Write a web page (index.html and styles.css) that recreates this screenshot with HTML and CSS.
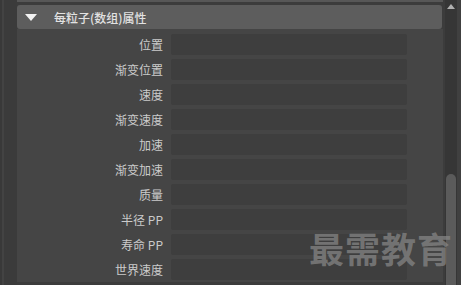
FILE: index.html
```html
<!DOCTYPE html>
<html lang="zh-CN">
<head>
    <meta charset="UTF-8">
    <title>每粒子(数组)属性</title>
    <link rel="stylesheet" href="styles.css">
</head>
<body>
    <div class="page">
        <div class="gutter"></div>

        <!-- Attribute editor section -->
        <div class="panel">
            <div class="section-head">
                <span class="arrow"></span>
                <span class="section-title">每粒子(数组)属性</span>
            </div>
            <div class="fields">
                <label>位置</label><div class="field"></div>
                <label>渐变位置</label><div class="field"></div>
                <label>速度</label><div class="field"></div>
                <label>渐变速度</label><div class="field"></div>
                <label>加速</label><div class="field"></div>
                <label>渐变加速</label><div class="field"></div>
                <label>质量</label><div class="field"></div>
                <label>半径 PP</label><div class="field"></div>
                <label>寿命 PP</label><div class="field"></div>
                <label>世界速度</label><div class="field"></div>
            </div>
        </div>

        <!-- Scrollbar -->
        <div class="scrollbar">
            <div class="scroll-up"></div>
            <div class="thumb"></div>
        </div>
        <div class="edge"></div>
    </div>

    <div class="watermark">最需教育</div>
</body>
</html>
```

FILE: styles.css
```css
body {
    margin: 0;
    background-color: #3c3c3c;
    font-family: "Noto Sans CJK SC", "Noto Sans", sans-serif;
    width: 461px;
    height: 285px;
    overflow: hidden;
    position: relative;
}

.page {
    display: flex;
    height: 285px;
    overflow: hidden;
}

.gutter {
    width: 17px;
    background: linear-gradient(to right, #393939 0, #393939 2px, #434343 2px, #434343 4px, #3b3b3b 4px);
}

.panel {
    width: 426px;
    border-top: 2px solid #575757;
    padding-top: 3px;
    display: flex;
    flex-direction: column;
}

.section-head {
    height: 24px;
    margin-right: 1px;
    background-color: #5d5d5d;
    border-radius: 3px;
    display: flex;
    align-items: center;
}

.arrow {
    width: 0;
    height: 0;
    margin-left: 8px;
    border-left: 6px solid transparent;
    border-right: 6px solid transparent;
    border-top: 7px solid #f2f2f2;
}

.section-title {
    margin-left: 17px;
    color: #e2e2e2;
    font-size: 12px;
    font-weight: 500;
}

/* Label / field rows */
.fields {
    background-color: #454545;
    padding: 5px 0 2px 0;
    display: grid;
    grid-template-columns: 146px 236px;
    grid-auto-rows: 21px;
    column-gap: 8px;
    row-gap: 4px;
}

.fields label {
    color: #cbcbcb;
    font-size: 12px;
    text-align: right;
    line-height: 21px;
}

.field {
    background-color: #3e3e3e;
    border-radius: 2px;
}

.scrollbar {
    width: 12px;
    margin-left: 2px;
    background-color: #363636;
    position: relative;
    overflow: hidden;
}

.scroll-up {
    width: 0;
    height: 0;
    margin: 4px auto 0 auto;
    border-left: 4px solid transparent;
    border-right: 4px solid transparent;
    border-bottom: 5px solid #b0b0b0;
}

.thumb {
    position: absolute;
    left: 1px;
    top: 174px;
    width: 10px;
    height: 120px;
    border-radius: 5px;
    background-color: #5b5b5b;
}

.edge {
    flex: 1;
    background-color: #404040;
}

.watermark {
    position: absolute;
    left: 309px;
    top: 222px;
    font-size: 35px;
    font-weight: bold;
    letter-spacing: 1px;
    color: rgba(135, 135, 135, 0.72);
    white-space: nowrap;
}
```
